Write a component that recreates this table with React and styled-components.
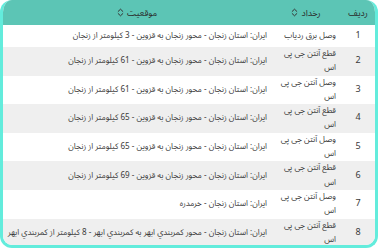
import React from "react";
import styled, { createGlobalStyle } from "styled-components";

const Global = createGlobalStyle`
  html, body { margin: 0; padding: 0; background: #ffffff; }
  body { font-family: "Noto Sans Arabic", "DejaVu Sans", sans-serif; }
`;

const Frame = styled.div`
  box-sizing: border-box;
  width: 378px;
  height: 248px;
  border: 3px solid #63ecdc;
  border-top: 0;
  border-radius: 12px;
  overflow: hidden;
  background: #ffffff;
  direction: rtl;
`;

const Table = styled.table`
  width: 100%;
  border-collapse: collapse;
  table-layout: fixed;
  font-family: "Noto Sans Arabic", "DejaVu Sans", sans-serif;
  color: #3a3a3a;
`;

const HeadRow = styled.tr`
  background: #5cc5b5;
  height: 25px;
`;

const Th = styled.th`
  font-weight: normal;
  font-size: 8.8px;
  color: #2a2a2a;
  text-align: center;
  padding: 0 2px;
  width: ${(p) => p.$w || "auto"};
`;

const HeadInner = styled.span`
  display: inline-flex;
  align-items: center;
  gap: 3px;
`;

const Row = styled.tr`
  background: ${(p) => (p.$alt ? "#efefef" : "#ffffff")};
`;

const Td = styled.td`
  height: 22px;
  padding: ${(p) => p.$pad || "0 5px"};
  line-height: 14.3px;
  vertical-align: middle;
  text-align: ${(p) => p.$align || "right"};
  font-size: ${(p) => p.$fs || "8.1px"};
  white-space: ${(p) => (p.$nowrap ? "nowrap" : "normal")};
`;

const SortIcon = () => (
  <svg width="7" height="9" viewBox="0 0 7 9" fill="none" stroke="#333" strokeWidth="1" strokeLinecap="round" strokeLinejoin="round">
    <path d="M1.2 3.4 L3.5 1.2 L5.8 3.4" />
    <path d="M1.2 5.6 L3.5 7.8 L5.8 5.6" />
  </svg>
);

const rows = [
  ["1", "وصل برق ردیاب", "ایران: استان زنجان - محور زنجان به قزوین - 3 کیلومتر از زنجان"],
  ["2", "قطع آنتن جی پی اس", "ایران: استان زنجان - محور زنجان به قزوین - 61 کیلومتر از زنجان"],
  ["3", "وصل آنتن جی پی اس", "ایران: استان زنجان - محور زنجان به قزوین - 61 کیلومتر از زنجان"],
  ["4", "قطع آنتن جی پی اس", "ایران: استان زنجان - محور زنجان به قزوین - 65 کیلومتر از زنجان"],
  ["5", "وصل آنتن جی پی اس", "ایران: استان زنجان - محور زنجان به قزوین - 65 کیلومتر از زنجان"],
  ["6", "قطع آنتن جی پی اس", "ایران: استان زنجان - محور زنجان به قزوین - 69 کیلومتر از زنجان"],
  ["7", "وصل آنتن جی پی اس", "ایران: استان زنجان - خرمدره"],
  ["8", "قطع آنتن جی پی اس", "ایران: استان زنجان - محور کمربندي ابهر به کمربندي ابهر - 8 کیلومتر از کمربندي ابهر"],
];

export default function App() {
  return (
    <>
      <Global />
      <Frame>
        <Table>
          <thead>
            <HeadRow>
              <Th $w="30px">ردیف</Th>
              <Th $w="66px">
                <HeadInner>رخداد<SortIcon /></HeadInner>
              </Th>
              <Th>
                <HeadInner>موقعیت<SortIcon /></HeadInner>
              </Th>
            </HeadRow>
          </thead>
          <tbody>
            {rows.map((r, i) => (
              <Row key={r[0]} $alt={i % 2 === 1}>
                <Td $align="center" $fs="9px" $pad="0 2px">{r[0]}</Td>
                <Td $pad="0 5px 0 6px">{r[1]}</Td>
                <Td $nowrap $pad="0 4px">{r[2]}</Td>
              </Row>
            ))}
          </tbody>
        </Table>
      </Frame>
    </>
  );
}
